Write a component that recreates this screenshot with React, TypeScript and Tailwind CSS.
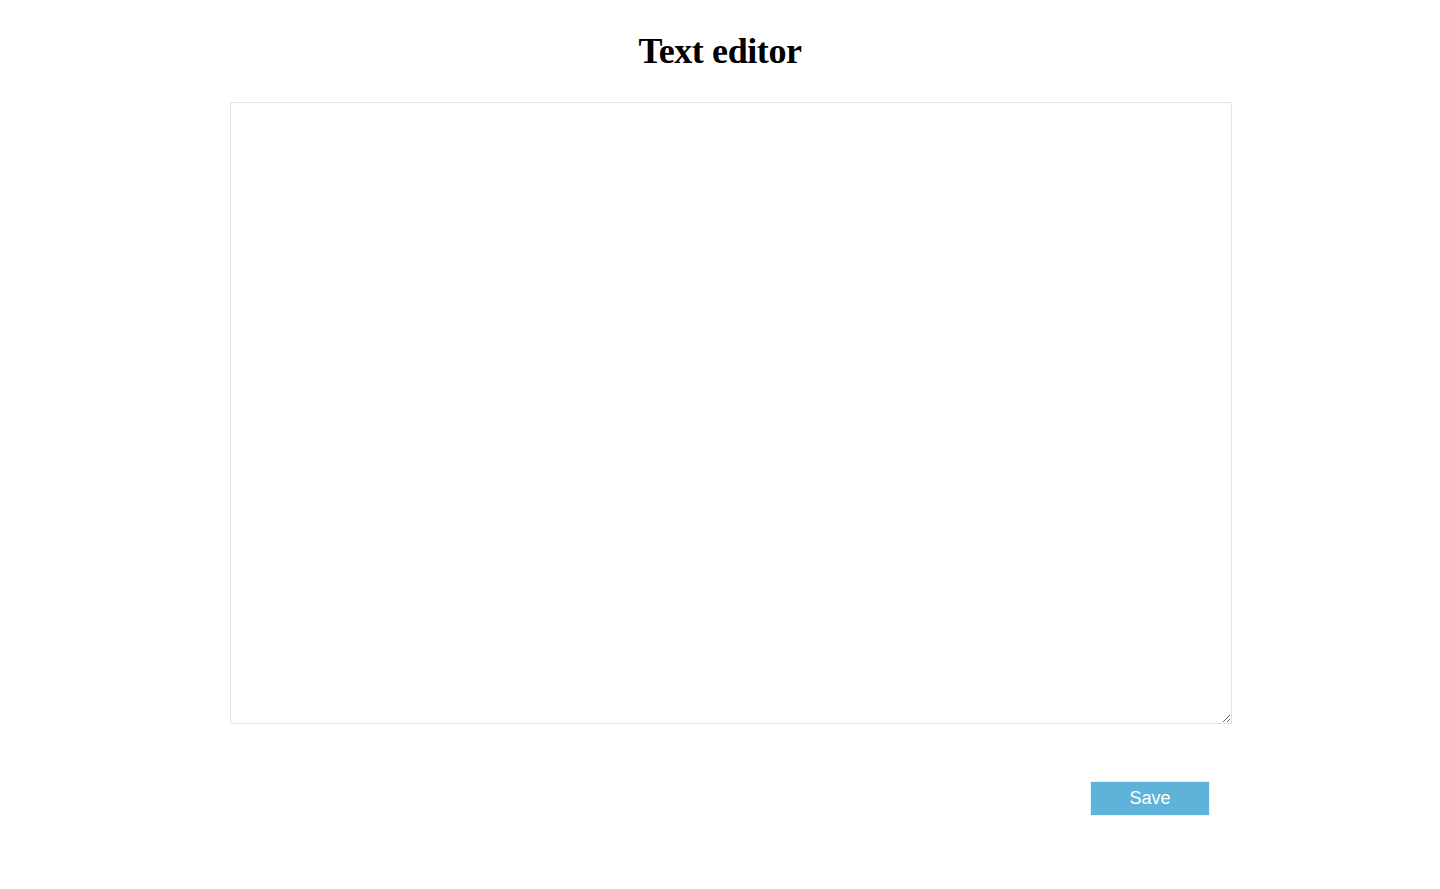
export default function App() {
  return (
    <div className="min-h-screen bg-white" style={{ fontFamily: '"Liberation Sans", Arial, sans-serif' }}>
      <h1 className="pt-[26px] text-center text-[36px] font-bold leading-[50px] tracking-[-0.4px] text-black [font-family:'Liberation_Serif',serif]">
        Text editor
      </h1>
      <div className="mx-auto mt-[26px] w-[1024px] pl-[22px]">
        <textarea className="block h-[622px] w-[1002px] resize border border-[#e3e3e3] bg-white p-2 outline-none" />
        <div className="mt-[58px] flex justify-end pr-[22px]">
          <button className="-mt-px h-[35px] w-[120px] border border-[#e8f4fa] bg-[#5fb3d9] text-[18px] text-white">
            Save
          </button>
        </div>
      </div>
    </div>
  );
}
